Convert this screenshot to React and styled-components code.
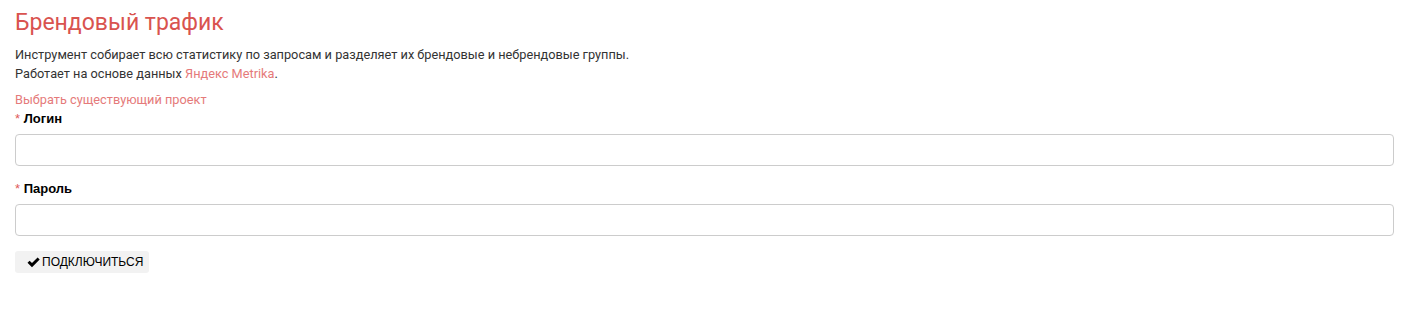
import React from 'react'
import styled, { createGlobalStyle } from 'styled-components';

const Global = createGlobalStyle`
    body{
        margin: 0;
        background: #fff;
        font-family: Roboto, "Liberation Sans", sans-serif;
    }
`;

function Field({label, type}) {
    return (
        <FieldBox>
            <Label><span>*</span> {label}</Label>
            <Input type={type} />
        </FieldBox>
    )
}

function App() {
    return (
        <Page>
            <Global />
            <Title>Брендовый трафик</Title>
            <Description>
                Инструмент собирает всю статистику по запросам и разделяет их брендовые и небрендовые группы.<br />
                Работает на основе данных <a href="#">Яндекс Metrika</a>.
            </Description>

            <ProjectLink href="#">Выбрать существующий проект</ProjectLink>

            <Field label="Логин" type="text" />
            <Field label="Пароль" type="password" />

            <Button>
                <svg width="13" height="11" viewBox="0 0 13 11">
                    <path d="M0.5 5.8 L2.6 3.7 L5 6.1 L10.6 0.5 L12.7 2.6 L5 10.3 Z" fill="#000" />
                </svg>
                ПОДКЛЮЧИТЬСЯ
            </Button>
        </Page>
    )
}

const Page = styled.div`
    padding: 0 13px 0 15px;
    display: flex;
    flex-direction: column;
    align-items: flex-start;
`;

const Title = styled.h1`
    margin: 8px 0 0;
    font-size: 23px;
    font-weight: 400;
    line-height: 30px;
    color: #d9534f;
`;

const Description = styled.p`
    margin: 7px 0 0;
    font-size: 12.75px;
    line-height: 19px;
    color: #333;

    a{
        color: #e57a7a;
        text-decoration: none;
    }
`;

const ProjectLink = styled.a`
    margin-top: 7px;
    font-size: 12.75px;
    line-height: 19px;
    color: #e57a7a;
    text-decoration: none;
`;

const FieldBox = styled.div`
    align-self: stretch;
    display: flex;
    flex-direction: column;
    margin-bottom: 13px;
`;

const Label = styled.label`
    font-family: "Liberation Sans", Arial, sans-serif;
    font-size: 13px;
    font-weight: bold;
    line-height: 19px;
    color: #000;
    margin-bottom: 6px;

    span{
        color: #e05a5a;
        font-weight: normal;
    }
`;

const Input = styled.input`
    box-sizing: border-box;
    height: 32px;
    width: 100%;
    border: 1px solid #ccc;
    border-radius: 4px;
    padding: 0 8px;
    font-size: 13px;
    outline: none;
`;

const Button = styled.button`
    display: flex;
    align-items: center;
    gap: 2px;
    height: 22px;
    margin-top: 2px;
    padding: 0 6px 0 12px;
    border: none;
    border-radius: 3px;
    background: #f2f2f2;
    font-family: "Liberation Sans", Arial, sans-serif;
    font-size: 12px;
    color: #000;
    cursor: pointer;
`;

export default App;
